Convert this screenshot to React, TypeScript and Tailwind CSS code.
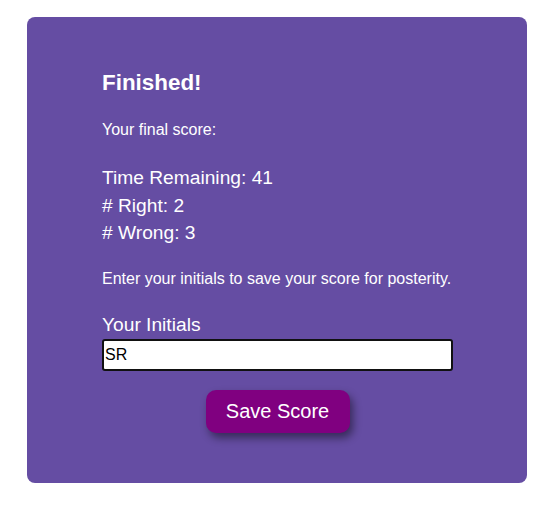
import React, { useState } from "react";

export default function App() {
  const [initials, setInitials] = useState("SR");

  return (
    <div className="min-h-[509px] bg-white pt-[17px] font-['Liberation_Sans',Arial,sans-serif]">
      <div className="ml-[27px] w-[500px] rounded-lg bg-[#654da3] pb-[50px] pt-[53px] text-white">
        <div className="ml-[75px] w-[351px]">
          <h2 className="text-[22.4px] font-bold leading-[26px]">Finished!</h2>
          <p className="mt-[25px] text-[16px] leading-[18px]">Your final score:</p>
          <div className="mt-[25px] text-[19.2px] leading-[27.5px]">
            <div>Time Remaining: 41</div>
            <div># Right: 2</div>
            <div># Wrong: 3</div>
          </div>
          <p className="mt-[23px] text-[16px] leading-[18px]">
            Enter your initials to save your score for posterity.
          </p>
          <label className="mt-[26px] block text-[19.2px] leading-[22px]">Your Initials</label>
          <input
            value={initials}
            onChange={(e) => setInitials(e.target.value)}
            className="mt-[3px] block h-[32px] w-[351px] rounded-[3px] border-2 border-[#111] bg-white px-[1px] text-[16px] text-black outline-none"
          />
          <div className="mt-[19px] flex justify-center">
            <button className="h-[43px] w-[144px] rounded-[10px] bg-[#800080] text-[20px] text-white shadow-[3px_5px_8px_rgba(0,0,0,0.45)]">
              Save Score
            </button>
          </div>
        </div>
      </div>
    </div>
  );
}
